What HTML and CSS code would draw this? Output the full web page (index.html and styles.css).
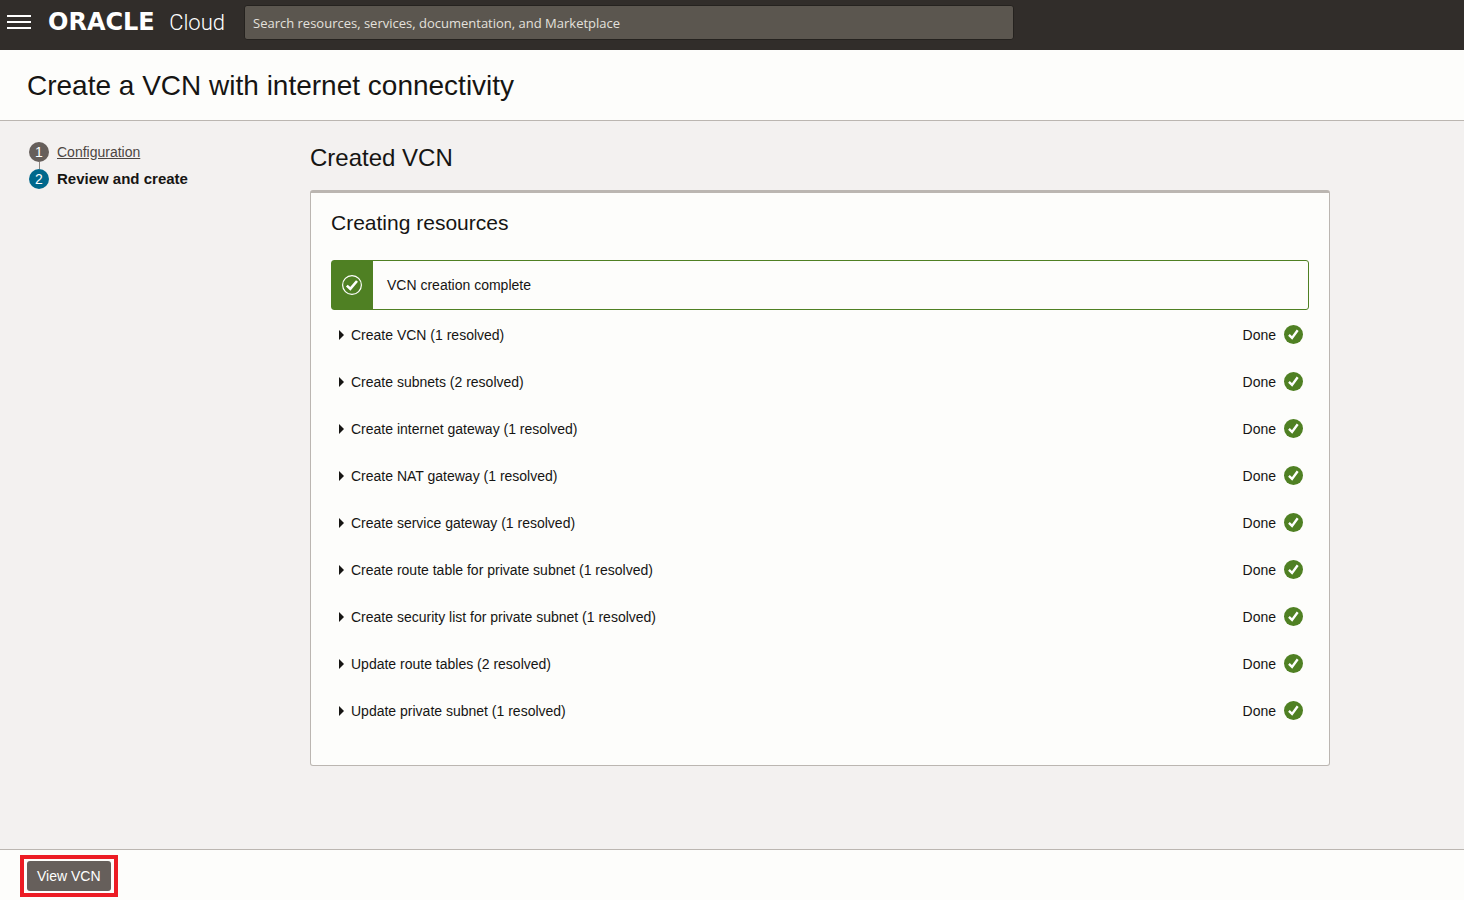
FILE: index.html
```html
<!DOCTYPE html>
<html lang="en">
<head>
<meta charset="utf-8">
<title>Create a VCN with internet connectivity</title>
<meta name="viewport" content="width=device-width, initial-scale=1">
<link rel="stylesheet" href="styles.css">
</head>
<body>
<svg class="sprite" aria-hidden="true">
  <symbol id="done" viewBox="0 0 20 20">
    <circle cx="10" cy="10" r="10" fill="#4f8023"/>
    <path d="M5.2 10.4 8.5 13.6 14.4 5.6" fill="none" stroke="#fff" stroke-width="2.5"/>
  </symbol>
</svg>
<header class="topbar">
  <button class="menu" type="button" aria-label="Open navigation menu">
    <svg width="24" height="16" viewBox="0 0 24 16"><path d="M0 1h24M0 7h24M0 13h24" stroke="#fff" stroke-width="2"/></svg>
  </button>
  <a class="logo" href="#"><span class="logo-oracle">ORACLE</span><span class="logo-cloud">Cloud</span></a>
  <input class="search" type="search" aria-label="Search" placeholder="Search resources, services, documentation, and Marketplace">
</header>
<div class="titlebar"><h1 class="page-title">Create a VCN with internet connectivity</h1></div>
<main class="content">
  <nav class="steps" aria-label="Steps">
    <ol class="step-list">
      <li class="step"><span class="step-number">1</span><a class="step-link" href="#">Configuration</a></li>
      <li class="step step-current" aria-current="step"><span class="step-number">2</span><span class="step-name">Review and create</span></li>
    </ol>
  </nav>
  <section class="main-column">
    <h2 class="section-title">Created VCN</h2>
    <div class="panel">
      <h3 class="panel-title">Creating resources</h3>
      <div class="notice" role="status">
        <div class="notice-icon">
          <svg width="22" height="22" viewBox="0 0 22 22" fill="none" stroke="#fff"><circle cx="11" cy="11" r="9.4" stroke-width="1.2"/><path d="M5.8 11.6 9.3 14.8 16 7" stroke-width="2.6"/></svg>
        </div>
        <p class="notice-text">VCN creation complete</p>
      </div>
      <ul class="tasks">
        <li class="task"><button class="task-toggle" type="button">Create VCN (1 resolved)</button><span class="status">Done<svg class="status-icon"><use href="#done"/></svg></span></li>
        <li class="task"><button class="task-toggle" type="button">Create subnets (2 resolved)</button><span class="status">Done<svg class="status-icon"><use href="#done"/></svg></span></li>
        <li class="task"><button class="task-toggle" type="button">Create internet gateway (1 resolved)</button><span class="status">Done<svg class="status-icon"><use href="#done"/></svg></span></li>
        <li class="task"><button class="task-toggle" type="button">Create NAT gateway (1 resolved)</button><span class="status">Done<svg class="status-icon"><use href="#done"/></svg></span></li>
        <li class="task"><button class="task-toggle" type="button">Create service gateway (1 resolved)</button><span class="status">Done<svg class="status-icon"><use href="#done"/></svg></span></li>
        <li class="task"><button class="task-toggle" type="button">Create route table for private subnet (1 resolved)</button><span class="status">Done<svg class="status-icon"><use href="#done"/></svg></span></li>
        <li class="task"><button class="task-toggle" type="button">Create security list for private subnet (1 resolved)</button><span class="status">Done<svg class="status-icon"><use href="#done"/></svg></span></li>
        <li class="task"><button class="task-toggle" type="button">Update route tables (2 resolved)</button><span class="status">Done<svg class="status-icon"><use href="#done"/></svg></span></li>
        <li class="task"><button class="task-toggle" type="button">Update private subnet (1 resolved)</button><span class="status">Done<svg class="status-icon"><use href="#done"/></svg></span></li>
      </ul>
    </div>
  </section>
</main>
<footer class="actions"><div class="highlight"><button class="view-button" type="button">View VCN</button></div></footer>
</body>
</html>
```
FILE: styles.css
```css
* { box-sizing: border-box; }
body {
  margin: 0;
  min-height: 100vh;
  display: flex;
  flex-direction: column;
  background: #f3f1f0;
  color: #161513;
  font: 14px/20px "Liberation Sans", Arial, sans-serif;
}
h1, h2, h3, p, ol, ul { margin: 0; padding: 0; font-weight: 400; }
ol, ul { list-style: none; }
button { font: inherit; border: 0; cursor: pointer; }
.sprite { display: none; }

.topbar {
  display: flex;
  align-items: center;
  min-height: 50px;
  padding: 0 8px 5px 7px;
  background: #312d2a;
}
.menu { padding: 0; background: none; line-height: 0; }
.logo {
  display: flex;
  align-items: baseline;
  justify-content: space-between;
  flex: none;
  width: 177px;
  margin: 0 19px 0 17px;
  color: #fff;
  text-decoration: none;
  line-height: 28px;
}
.logo-oracle { font-family: "DejaVu Sans", sans-serif; font-weight: 700; font-size: 24px; }
.logo-cloud { font-family: Roboto, sans-serif; font-weight: 300; font-size: 22px; }
.search {
  flex: 0 1 770px;
  min-width: 0;
  height: 35px;
  padding: 0 8px;
  border: 1px solid #25221f;
  border-radius: 3px;
  background: #5b564f;
  color: #fff;
  font: 13px "Open Sans", sans-serif;
}
.search::placeholder { color: #e4e1dd; opacity: 1; }

.titlebar { padding: 19px 27px 17px; background: #fdfdfb; border-bottom: 1px solid #bbb6b1; }
.page-title { font-size: 28px; line-height: 34px; }

.content { flex: 1; display: flex; padding: 21px 134px 83px 29px; }
.steps { flex: 0 0 281px; }
.step-list { display: grid; gap: 7px; }
.step { position: relative; display: flex; gap: 8px; }
.step + .step::before {
  content: "";
  position: absolute;
  left: 10px;
  bottom: 100%;
  height: 7px;
  border-left: 1px solid #8b8580;
}
.step-number {
  width: 20px;
  height: 20px;
  border-radius: 50%;
  background: #665f5b;
  color: #fff;
  text-align: center;
}
.step-link { color: #4d4642; }
.step-current .step-name { font-size: 15px; font-weight: 700; }
.step-current .step-number { background: #00688c; }

.main-column { flex: 1; min-width: 0; }
.section-title { font-size: 24px; line-height: 32px; margin-bottom: 16px; }
.panel {
  padding: 16px 20px 31px;
  background: #fdfdfb;
  border: 1px solid #bbb6b1;
  border-top-width: 3px;
  border-radius: 3px;
}
.panel-title { font-size: 21px; line-height: 28px; margin-bottom: 23px; }
.notice {
  display: flex;
  min-height: 50px;
  border: 1px solid #4f8023;
  border-radius: 3px;
}
.notice-icon { display: grid; place-items: center start; width: 41px; padding-left: 9px; background: #4f8023; }
.notice-text { padding: 14px; }
.tasks { padding: 1px 6px 0 8px; }
.task { display: flex; align-items: center; justify-content: space-between; min-height: 47px; }
.task-toggle {
  display: flex;
  align-items: center;
  gap: 7px;
  padding: 0;
  background: none;
  color: inherit;
  text-align: left;
}
.task-toggle::before {
  content: "";
  border: 5px solid transparent;
  border-left-color: #161513;
  border-right-width: 0;
}
.status { display: flex; align-items: center; gap: 8px; }
.status-icon { width: 19px; height: 19px; }

.actions { padding: 5px 20px 3px; background: #fdfdfb; border-top: 1px solid #bbb6b1; }
.highlight { width: fit-content; padding: 2px 3px; border: 4px solid #ec1c24; }
.view-button {
  display: block;
  padding: 5px 10px;
  border-radius: 3px;
  background: #665f5b;
  color: #fff;
}
```
